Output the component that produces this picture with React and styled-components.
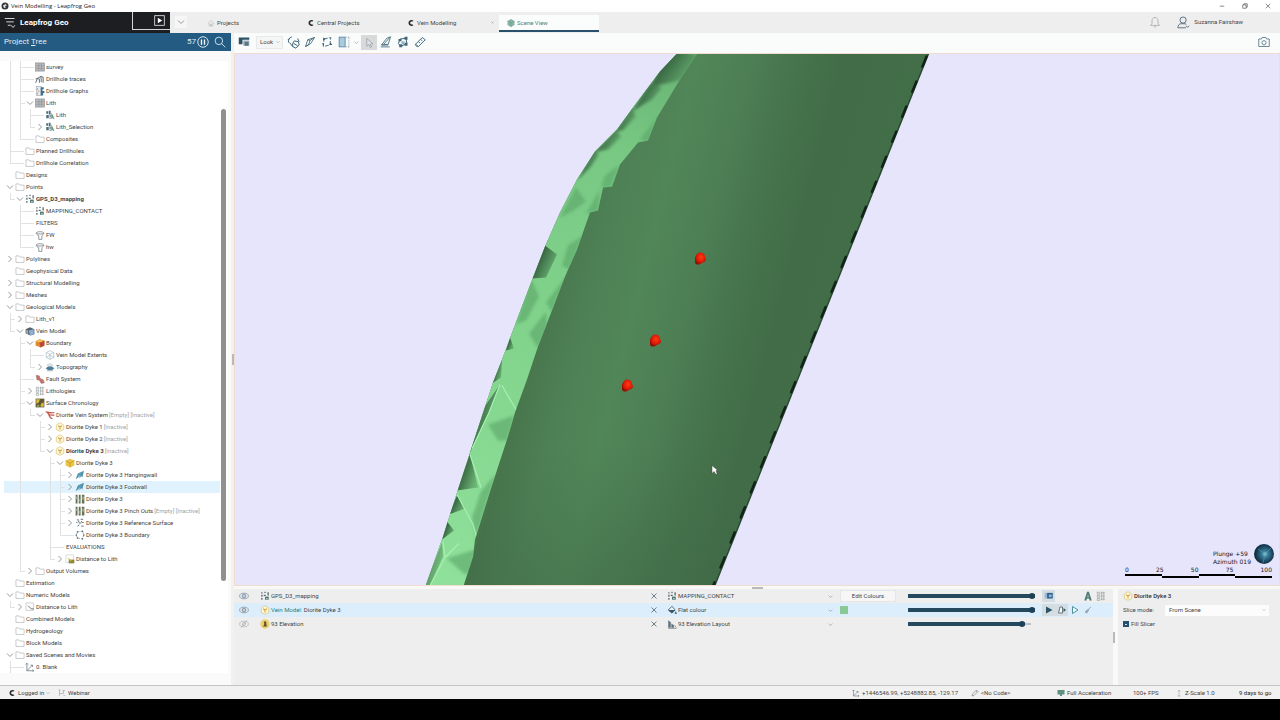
import React, { useState } from "react";
//styling
import styled, { createGlobalStyle, css } from "styled-components";

//tree rows, in the order they are listed
const treeData = [
  { level: 2, label: "survey", icon: "table" },
  { level: 2, label: "Drillhole traces", icon: "traces" },
  { level: 2, label: "Drillhole Graphs", icon: "graphs" },
  { level: 2, label: "Lith", icon: "table", open: true },
  { level: 3, label: "Lith", icon: "lith" },
  { level: 3, label: "Lith_Selection", icon: "lith", open: false },
  { level: 2, label: "Composites", icon: "folder" },
  { level: 1, label: "Planned Drillholes", icon: "folder" },
  { level: 1, label: "Drillhole Correlation", icon: "folder" },
  { level: 0, label: "Designs", icon: "folder" },
  { level: 0, label: "Points", icon: "folder", open: true },
  { level: 1, label: "GPS_D3_mapping", icon: "points", open: true, bold: true },
  { level: 2, label: "MAPPING_CONTACT", icon: "points" },
  { level: 2, label: "FILTERS" },
  { level: 2, label: "FW", icon: "filter" },
  { level: 2, label: "hw", icon: "filter" },
  { level: 0, label: "Polylines", icon: "folder", open: false },
  { level: 0, label: "Geophysical Data", icon: "folder" },
  { level: 0, label: "Structural Modelling", icon: "folder", open: false },
  { level: 0, label: "Meshes", icon: "folder", open: false },
  { level: 0, label: "Geological Models", icon: "folder", open: true },
  { level: 1, label: "Lith_v1", icon: "folder", open: false },
  { level: 1, label: "Vein Model", icon: "model", open: true },
  { level: 2, label: "Boundary", icon: "boundary", open: true },
  { level: 3, label: "Vein Model Extents", icon: "cube" },
  { level: 3, label: "Topography", icon: "topo", open: false },
  { level: 2, label: "Fault System", icon: "fault" },
  { level: 2, label: "Lithologies", icon: "legend", open: false },
  { level: 2, label: "Surface Chronology", icon: "chronology", open: true },
  { level: 3, label: "Diorite Vein System", note: "[Empty] [Inactive]", icon: "veins", open: true },
  { level: 4, label: "Diorite Dyke 1", note: "[Inactive]", icon: "dyke", open: false },
  { level: 4, label: "Diorite Dyke 2", note: "[Inactive]", icon: "dyke", open: false },
  { level: 4, label: "Diorite Dyke 3", note: "[Inactive]", icon: "dyke", open: true, bold: true },
  { level: 5, label: "Diorite Dyke 3", icon: "dykeFull", open: true },
  { level: 6, label: "Diorite Dyke 3 Hangingwall", icon: "wall", open: false },
  { level: 6, label: "Diorite Dyke 3 Footwall", icon: "wall", open: false },
  { level: 6, label: "Diorite Dyke 3", icon: "segments", open: false },
  { level: 6, label: "Diorite Dyke 3 Pinch Outs", note: "[Empty] [Inactive]", icon: "segments", open: false },
  { level: 6, label: "Diorite Dyke 3 Reference Surface", icon: "reference", open: false },
  { level: 6, label: "Diorite Dyke 3 Boundary", icon: "outline" },
  { level: 5, label: "EVALUATIONS" },
  { level: 5, label: "Distance to Lith", icon: "distanceEval", open: false },
  { level: 2, label: "Output Volumes", icon: "folder", open: false },
  { level: 0, label: "Estimation", icon: "folder" },
  { level: 0, label: "Numeric Models", icon: "folder", open: true },
  { level: 1, label: "Distance to Lith", icon: "distance", open: false },
  { level: 0, label: "Combined Models", icon: "folder" },
  { level: 0, label: "Hydrogeology", icon: "folder" },
  { level: 0, label: "Block Models", icon: "folder" },
  { level: 0, label: "Saved Scenes and Movies", icon: "folder", open: true },
  { level: 1, label: "0. Blank", icon: "axes", more: true },
];

const tabs = [
  { label: "Projects", icon: "home" },
  { label: "Central Projects", icon: "central" },
  { label: "Vein Modelling", icon: "central", closable: true },
  { label: "Scene View", icon: "scene" },
];

const shapes = [
  { id: "gps", name: "GPS_D3_mapping", icon: "points", view: "MAPPING_CONTACT", viewIcon: "points", opacity: 100, visible: true },
  { id: "vein", prefix: "Vein Model:", name: "Diorite Dyke 3", icon: "dyke", view: "Flat colour", viewIcon: "bucket", opacity: 100, visible: true },
  { id: "elev", name: "93 Elevation", icon: "section", view: "93 Elevation Layout", viewIcon: "layout", opacity: 92, visible: false },
];

//16x16 drawings
const glyphs = {
  folder: <path d="M1.5 13.5V3h5l1.5 2h6.500v8.500z" fill="#fff" stroke="#a9adb0" />,
  table: (
    <>
      <rect x="1" y="1.500" width="14" height="13" fill="#b9bcbe" stroke="#84888a" />
      <path d="M1 6h14M1 10h14M6 2v12M10.500 2v12" stroke="#8d9193" />
    </>
  ),
  traces: <path d="M1 14l3-7 5-3 4 1v9M4 7l3 1v6M9 4l1 4v5M1 8l3-1" fill="none" stroke="#59646b" strokeWidth="1.500" />,
  graphs: (
    <>
      <rect x="2" y="1" width="8" height="14" fill="#eceff1" stroke="#a0a5a8" />
      <path d="M4 3v3l3 2-3 3v3" fill="none" stroke="#c27a6c" />
      <path d="M9 2h5v3h-2v3h3v3h-2v4H9z" fill="#3c7191" />
    </>
  ),
  lith: (
    <>
      <path d="M2 2h3v4H2zM6 1h3v6H6zM2 8h4v5H2z" fill="#4b6c78" />
      <path d="M10 4v8l5 3-2-6z" fill="#5f9a86" />
      <path d="M7 8h3v3H7zM7 12h4v2H7z" fill="#8d9aa0" />
    </>
  ),
  points: (
    <>
      <path d="M2 2h2v2H2zM2 6h2v3H2zM2 11h2v3H2zM7 1h2v2H7zM6 6h3v2H6zM12 2h2v5h-2z" fill="#566168" />
      <path d="M8 9h6v5H8z" fill="#4d7775" />
      <path d="M10 11h2v2h-2z" fill="#d6e2df" />
    </>
  ),
  filter: <path d="M2 5c0-3 12-3 12 0 0 2-2 3-3 4v6H6V9C4 8 2 7 2 5zM2 5c2 2 10 2 12 0" fill="none" stroke="#7d8488" strokeWidth="1.300" />,
  model: (
    <>
      <path d="M1 5l7-3 7 3v8l-6 2-8-3z" fill="#54616a" />
      <path d="M6 7l8-2v8l-6 2z" fill="#8fb0d6" />
      <path d="M2 6l3 1v6l-3-1z" fill="#a4abb0" />
    </>
  ),
  boundary: (
    <>
      <path d="M1 5l6-3 8 2v8l-6 3-8-3z" fill="#e08a2c" />
      <path d="M7 7l8-3v8l-6 3z" fill="#b9473a" />
      <path d="M1 5l6-3 8 2-7 3z" fill="#f4bd55" />
    </>
  ),
  cube: <path d="M8 1l6 3v8l-6 3-6-3V4zM2 4l6 3 6-3M8 7v8M2 12l6-4 6 4" fill="none" stroke="#9db5bf" />,
  topo: (
    <>
      <path d="M3 5l5-3 5 3-5 3z" fill="#dfe7ea" stroke="#a7b3b8" strokeWidth=".6" />
      <path d="M1 10l4-3h6l4 3-4 3H5z" fill="#4b7f9c" />
      <path d="M3 14h10" stroke="#9aa7ad" strokeWidth="1.200" />
    </>
  ),
  fault: <path d="M2 2l5 1 1 4 5 2 2 5-5 1-3-5-4-1z" fill="#c4706c" stroke="#9a6a6a" strokeWidth=".8" />,
  legend: <path d="M2 2h4v3H2zM2 7h4v3H2zM2 12h4v3H2zM8 3h6M8 8h6M8 13h6M9 1v14M12.500 1v14" fill="none" stroke="#90969a" />,
  chronology: (
    <>
      <rect x="1" y="1" width="14" height="14" fill="#5d5638" />
      <path d="M2 2h6L6 7 2 9zM9 11c1-3 3-4 5-4v7H9z" fill="#d9b93c" />
      <path d="M3 11h4v3H3z" fill="#8ea354" />
    </>
  ),
  veins: <path d="M1 3c5 0 6 3 14 1M4 4c2 5 5 4 11 4M6 7c1 4 2 6 6 7" fill="none" stroke="#c5564f" strokeWidth="2" />,
  dyke: (
    <>
      <path d="M8 1l6 4v7l-6 3-6-3V5z" fill="#fdf6dc" stroke="#d6bd63" />
      <path d="M5 6l3 2 3-2M8 8v4" fill="none" stroke="#d1a63e" strokeWidth="1.800" />
    </>
  ),
  dykeFull: (
    <>
      <path d="M8 1l7 3v8l-7 3-7-3V4z" fill="#ecc443" />
      <path d="M1 4l7 4 7-4M8 8v7" fill="none" stroke="#b98f24" />
    </>
  ),
  wall: (
    <>
      <path d="M2 14l3-8 9-4-2 10-3-3z" fill="#5ba3bf" />
      <path d="M2 14l3-8 9-4M7 13l6-9" fill="none" stroke="#356f8c" />
    </>
  ),
  segments: (
    <>
      <path d="M1 1h3v14H1zM6 1h3v14H6zM11 1h4v14h-4z" fill="#66705a" />
      <path d="M2 4h2v4H2zM7 8h2v4H7zM12 4h2v5h-2z" fill="#a5b894" />
    </>
  ),
  reference: <path d="M3 3h3M9 2h4M2 7h2M6 8h4M12 7h2M4 13l3-2M10 13h4M6 4v3M10 5l2 3" fill="none" stroke="#5b6b74" strokeWidth="1.500" />,
  outline: (
    <>
      <path d="M4 3l8-1 2 6-2 6-8-1-2-5z" fill="none" stroke="#577082" strokeDasharray="3 2" />
      <path d="M3 2h2v2H3zM11 1h2v2h-2zM13 7h2v2h-2zM11 13h2v2h-2zM3 12h2v2H3zM1 7h2v2H1z" fill="#3f586a" />
    </>
  ),
  distanceEval: (
    <>
      <path d="M1.500 1.500h12v12h-12z" fill="#fff" stroke="#c5c8ca" />
      <path d="M6 9h9v6H6z" fill="#8a8a3c" />
      <path d="M5 7l5 4" stroke="#d8b23b" strokeWidth="2" />
    </>
  ),
  distance: (
    <>
      <path d="M1.500 1.500h12v12h-12z" fill="#fff" stroke="#b3b7ba" />
      <path d="M5 6l5 5h4" fill="none" stroke="#5a6a72" strokeWidth="1.500" />
    </>
  ),
  axes: <path d="M3 2v12h11M3 14l9-9M1 4l2-2 2 2M12 12l2 2-2 1M12 8V5H9" fill="none" stroke="#67737b" strokeWidth="1.200" />,
  home: <path d="M8 3l6 6M8 3L2 9M4 8v6h8V8M7 14v-4h2v4" fill="none" stroke="#b3b6b8" strokeWidth="1.200" />,
  central: <path d="M13 3.500C9 .5 3 3 3 8s6 7.500 10 4.500l-3-2c-2 1-3.500-.5-3.500-2.500S8 4.500 10 5.500z" fill="#23282c" />,
  scene: (
    <>
      <path d="M8 0l7 4v8l-7 4-7-4V4z" fill="#86b3a5" />
      <path d="M1 4l7 4 7-4M8 8v8" fill="none" stroke="#69998b" />
    </>
  ),
  bucket: (
    <>
      <path d="M2 8l6-6 5 6-5 5z" fill="#eef3f6" stroke="#33566b" strokeWidth="1.300" />
      <path d="M2 8h11l-5 5z" fill="#33566b" />
      <path d="M14 10l2 4h-4z" fill="#33566b" />
    </>
  ),
  layout: (
    <>
      <path d="M2 14V2l4 3v9zM7 14V7l4 3v4z" fill="#62707a" />
      <path d="M2 15h13M12 10l3 4" stroke="#8e979d" strokeWidth="1.500" />
    </>
  ),
  section: (
    <>
      <circle cx="8" cy="8" r="7.500" fill="#ecd06a" />
      <path d="M6 4h4v3l1 5H5l2-4z" fill="#5b5030" />
    </>
  ),
  eye: (
    <>
      <ellipse cx="8" cy="8" rx="7" ry="4.500" fill="#e8eef3" stroke="#8c9aa6" strokeWidth="1.300" />
      <circle cx="8" cy="8" r="3" fill="#c3d0da" stroke="#73879a" strokeWidth="1.300" />
    </>
  ),
  eyeOff: (
    <>
      <ellipse cx="8" cy="8" rx="7" ry="4.500" fill="none" stroke="#a9afb4" />
      <circle cx="8" cy="8" r="2.500" fill="none" stroke="#a0a7ac" />
      <path d="M3 14L13 2" stroke="#a0a7ac" />
    </>
  ),
  close: <path d="M3 3l10 10M13 3L3 13" stroke="#4c6472" strokeWidth="1.600" />,
  down: <path d="M2 5l6 6 6-6" fill="none" stroke="#7a8083" strokeWidth="1.600" />,
  right: <path d="M5 2l6 6-6 6" fill="none" stroke="#7a8083" strokeWidth="1.600" />,
  menu: <path d="M1 2h13M3 6.500h10M5 11h4M9.500 11l2.500 3 2.500-3" fill="none" stroke="#e4e6e8" strokeWidth="1.200" />,
  play: (
    <>
      <rect x="1" y="1" width="14" height="14" fill="none" stroke="#e7e7e7" strokeWidth="1.200" />
      <path d="M5.500 4l6.500 4-6.500 4z" fill="#fff" />
    </>
  ),
  pause: (
    <>
      <circle cx="8" cy="8" r="7" fill="none" stroke="#dce9f1" strokeWidth="1.300" />
      <path d="M6 4.500v7M10 4.500v7" stroke="#fff" strokeWidth="1.800" />
    </>
  ),
  search: <path d="M6.500 1.500a5 5 0 1 1 0 10 5 5 0 0 1 0-10zM10 10l5 5" fill="none" stroke="#c9dde9" strokeWidth="1.300" />,
  bell: <path d="M2 12.500h12l-2-2.500V6.500C12 4 10.500 2 8 2S4 4 4 6.500V10zM6.500 14.500h3" fill="none" stroke="#9fa3a6" />,
  user: (
    <>
      <circle cx="7.500" cy="5" r="3.800" fill="none" stroke="#5f7080" strokeWidth="1.200" />
      <path d="M1 14.500c0-3 2-5 4-5h5l1.500 1M1 14.500h10M11 12l2 2 2-2" fill="none" stroke="#5f7080" strokeWidth="1.200" />
    </>
  ),
  camera: (
    <>
      <path d="M1 4h3.500l1-2h5l1 2H15v10H1z" fill="none" stroke="#5c7d8e" strokeWidth="1.200" />
      <circle cx="8" cy="9" r="2.800" fill="none" stroke="#5c7d8e" strokeWidth="1.200" />
    </>
  ),
  clearScene: (
    <>
      <path d="M1 2h14v3H6v6H1z" fill="#2f5166" />
      <path d="M7 6h8v7H7z" fill="#9aabb5" />
      <path d="M9 8h5v5H9z" fill="#5a7585" />
    </>
  ),
  slicer: (
    <path
      d="M2 8c-1-3 1-6 4-7M1 5l3-3M9 6l5 1 1 4-4 4-4-2 0-4zM3 8l4 5M13 3l2 4M8 9l5 3"
      fill="none"
      stroke="#3c6275"
      strokeWidth="1.200"
    />
  ),
  section2: <path d="M2 14l3-9 9-3-5 8zM5 5l3 1 6-4M8 6l-2 6M2 14l4-2" fill="none" stroke="#3c6275" strokeWidth="1.100" />,
  plane: (
    <>
      <path d="M4 4l9-2-1 10-9 2z" fill="none" stroke="#3c6275" strokeWidth="1.200" strokeDasharray="5 2" />
      <path d="M3 2l3 2-3 2zM13 9l2 3h-4zM1 10h3v3z" fill="#2f5468" />
    </>
  ),
  slice: (
    <>
      <rect x="1.500" y="1.500" width="8" height="13" fill="#a9cbe0" stroke="#4f7a94" />
      <path d="M10 1.500h5M10 14.500h5M14.500 2v13" fill="none" stroke="#8da2af" strokeDasharray="2 1" />
    </>
  ),
  pointer: <path d="M4 2l9 8-4 .500 2 4-2 .5-2-4-3 2.500z" fill="#dfe2e3" stroke="#8f999f" />,
  draw: <path d="M1 14.500h12M2 12L9 3l5-2-3 10zM5 11l8-9M2 12h9" fill="none" stroke="#3c6275" strokeWidth="1.100" />,
  ring: (
    <>
      <path d="M4 4l8-1 1 7-8 4-3-4z" fill="none" stroke="#3c6275" strokeWidth="1.300" />
      <path d="M2 4h4v3H2zM10 1h4v4h-4zM10 9h4v4h-4zM3 11h4v4H3z" fill="#42677a" />
      <path d="M6 7h4v4H6z" fill="#8fb5c5" />
    </>
  ),
  ruler: <path d="M2 11L11 2l4 3-9 9c-2 1-4-1-4-3zM2 11l4 3M6 8l2 1M9 5l2 1" fill="none" stroke="#466d80" strokeWidth="1.300" />,
  pencil: <path d="M2 14l1-4 8-8 3 3-8 8zM10 4l2 2" fill="none" stroke="#6d767c" strokeWidth="1.200" />,
  monitor: <path d="M1 2h14v9h-5v3H6v-3H1z" fill="#5c9080" />,
  zscale: <path d="M8 2v12M5 5l3-3 3 3M5 14h6" fill="none" stroke="#a3a8ab" strokeWidth="1.300" />,
  branch: <path d="M3 2v12M3 9h8M11 9V3M1 2h4M9 3h5M11 13h3" fill="none" stroke="#9aa0a4" strokeWidth="1.200" />,
  sync: (
    <>
      <path d="M1 3h8v9H1z" fill="#9db7d0" />
      <path d="M5 3h9v9H5z" fill="#30618c" />
      <circle cx="10" cy="7.500" r="2.500" fill="#8db8dd" />
    </>
  ),
  letterA: <path d="M2 15L6.500 1h3L14 15h-3.500l-.8-3H6.300l-.8 3zM7 9.500h2L8 5.500z" fill="#4e7d76" />,
  solidPlay: <path d="M2 1l13 7-13 7z" fill="#2b5266" />,
  edgePlay: <path d="M3 1l11 7-11 7z" fill="#f1fbff" stroke="#3e8391" strokeWidth="1.800" />,
  frontPlay: (
    <>
      <path d="M1 14L4 2h5v12z" fill="#f4f6f7" stroke="#3b5563" strokeWidth="1.500" />
      <path d="M11 4l5 4-5 4z" fill="#3b5563" />
    </>
  ),
  brush: <path d="M14 2L7 8M9 8l-3 6-4-2 4-4h4" fill="#a8bfc8" stroke="#7f9dab" strokeWidth="1.600" />,
  app: (
    <>
      <circle cx="8" cy="8" r="7" fill="#33383c" />
      <path d="M4 7l5-3 3 3-4 1 2 3-4 1z" fill="#dde0e2" />
    </>
  ),
  minimise: <path d="M2 8.500h12" stroke="#333" strokeWidth="1.500" />,
  restore: <path d="M2 5h9v9H2zM5 5V2h9v9h-3" fill="none" stroke="#333" strokeWidth="1.500" />,
  windowClose: <path d="M2 2l12 12M14 2L2 14" stroke="#333" strokeWidth="1.500" />,
};

const Icon = ({ name, size = 10 }) => (
  <Glyph viewBox="0 0 16 16" $size={size} aria-hidden="true">
    {glyphs[name]}
  </Glyph>
);

//true when a later row still hangs on the guide line of that level
const hasNext = (index, level) => {
  for (let i = index + 1; i < treeData.length; i++) {
    if (treeData[i].level < level) return false;
    if (treeData[i].level === level) return true;
  }
  return Boolean(treeData[treeData.length - 1].more);
};

const ProjectTree = () => {
  const [selected, setSelected] = useState(35);
  return (
    <Sidebar>
      <SideHeader>
        <h2>
          Project <u>T</u>ree
        </h2>
        <span>57</span>
        <IconButton aria-label="Pause processing">
          <Icon name="pause" size={12} />
        </IconButton>
        <IconButton aria-label="Search">
          <Icon name="search" size={12} />
        </IconButton>
      </SideHeader>
      <TreeArea>
        <Tree role="tree">
          {treeData.map((row, i) => (
            <TreeRow
              key={i}
              role="treeitem"
              $selected={i === selected}
              onClick={() => setSelected(i)}
            >
              {Array.from({ length: row.level }, (_, k) => (
                <Guide key={k} $line={hasNext(i, k + 1)} $tick={k === row.level - 1} />
              ))}
              {row.open === undefined ? (
                <Guide $dash={row.level > 0} />
              ) : (
                <Toggle aria-label={row.open ? "Collapse" : "Expand"}>
                  <Icon name={row.open ? "down" : "right"} size={8} />
                </Toggle>
              )}
              {row.icon && <Icon name={row.icon} />}
              <Label $bold={row.bold}>{row.label}</Label>
              {row.note && <Note>{row.note}</Note>}
            </TreeRow>
          ))}
        </Tree>
        <ScrollTrack>
          <ScrollThumb />
        </ScrollTrack>
      </TreeArea>
    </Sidebar>
  );
};

//vein mesh
const Mesh = () => (
  <Canvas viewBox="235 54 1044 532" preserveAspectRatio="xMidYMid slice" aria-hidden="true">
    <defs>
      <linearGradient id="face" gradientUnits="userSpaceOnUse" x1="540" y1="290" x2="850" y2="370">
        <stop offset="0" stopColor="#47744b" />
        <stop offset=".14" stopColor="#4e8055" />
        <stop offset=".3" stopColor="#518658" />
        <stop offset=".46" stopColor="#4d7e54" />
        <stop offset=".6" stopColor="#46744c" />
        <stop offset=".74" stopColor="#416c47" />
        <stop offset="1" stopColor="#426e48" />
      </linearGradient>
      <linearGradient id="fade" x1="0" y1="0" x2="0" y2="1">
        <stop offset=".5" stopColor="#3f6a46" stopOpacity="0" />
        <stop offset="1" stopColor="#3f6a46" stopOpacity=".45" />
      </linearGradient>
      <linearGradient id="rim" gradientUnits="userSpaceOnUse" x1="690" y1="53" x2="450" y2="587">
        <stop offset="0" stopColor="#68b273" />
        <stop offset=".2" stopColor="#78c883" />
        <stop offset=".5" stopColor="#80d28b" />
        <stop offset="1" stopColor="#8fe09a" />
      </linearGradient>
      <linearGradient id="facet" x1="0" y1="0" x2="1" y2=".6">
        <stop offset=".1" stopColor="#1f3e28" />
        <stop offset="1" stopColor="#6bb576" />
      </linearGradient>
      <radialGradient id="cone" cx=".55" cy=".4" r=".6">
        <stop offset="0" stopColor="#ff3a14" />
        <stop offset=".6" stopColor="#e01c06" />
        <stop offset="1" stopColor="#8e0f04" />
      </radialGradient>
      <filter id="shade" x="-10%" y="-10%" width="120%" height="120%">
        <feGaussianBlur stdDeviation="1.5" />
      </filter>
      <clipPath id="rimClip">
        <path d="M678 53L660 72 633 108 617 130 595 152 577 180 560 213 545 247 533 278 520 312 502 360 493 383 470 453 458 490 443 537 425 588H463L473 557 475 540 490 492 507 440 515 413 527 380 538 347 550 316 565 277 577 250 590 213 598 211 603 188 612 187 620 165 638 143 648 141 657 118 680 80 698 53z" />
      </clipPath>
    </defs>
    <path
      d="M678 53L660 72 633 108 617 130 595 152 577 180 560 213 545 247 533 278 520 312 502 360 493 383 470 453 458 490 443 537 425 588H714L929 53z"
      fill="url(#face)"
    />
    <path d="M553 310L463 587H714L826 310z" fill="url(#fade)" />
    <g clipPath="url(#rimClip)">
      <path d="M420 50h290v540H420z" fill="url(#rim)" />
      <g fill="#5aa467" opacity=".6" filter="url(#shade)">
        <path d="M657 118l-9 24-8-2zM620 165l-9 22-10 1 4-12zM600 190l-2 22-12 2zM583 236l-14 34-7-4 6-20z" />
        <path d="M546 312l2 20-11 16-8-14zM488 425l26-9-6 25-10 0zM566 277l-14 36-6-10z" />
        <path d="M496 474l-20 64-4-20 9-26zM447 559l28-9-2 20-8 5zM576 188l10 14-14 10-12 6z" />
        <path d="M531 279l8 18-13 24-10 4z" />
      </g>
      <g fill="url(#facet)" filter="url(#shade)">
        <path d="M676 50l22 6-14 24-18 4-16 4 8-16z" />
        <path d="M650 84l12 4-10 12-20 12z" />
        <path d="M632 108l4 9-13 14-8 1z" />
        <path d="M616 130l5 7-13 13-14 3z" />
        <path d="M594 150l5 5-8 12-14 14z" />
      </g>
      <g fill="url(#facet)">
        <path d="M545 246l12 9-11 23-14 1z" />
        <path d="M510 338l4 11-8 2z" />
        <path d="M502 360l-1 18-9 6z" />
        <path d="M500 385l-12 30-19 40 10-40z" opacity=".9" />
        <path d="M470 454l8 34-21 3z" />
        <path d="M457 496l8 13-16 6z" />
        <path d="M447 522l7 9-12 9z" />
        <path d="M442 543l1 14-14 31h-5z" opacity=".6" />
      </g>
      <path
        d="M500 385l-11 28-17 36M470 455l11 33M502 386l14 24M457 495l16 30 5 18M443 542l2 16-16 30M445 558l14-14"
        fill="none"
        stroke="#a8efb0"
        strokeWidth="1.200"
      />
    </g>
    <path d="M929 53L714 588" stroke="#2a4832" strokeWidth="1.500" />
    <path d="M926.500 57L712.500 588" stroke="#122419" strokeWidth="2.500" strokeDasharray="11 16" strokeLinecap="round" />
    {[
      [700, 259],
      [655, 341],
      [627, 386],
    ].map(([x, y]) => (
      <path
        key={x}
        d={`M${x} ${y - 6}c3 0 5 2 5 4l1 3c0 2-3 3-5 4-2 2-6 1-6-1v-5c1-3 3-5 5-5z`}
        fill="url(#cone)"
      />
    ))}
    <path d="M712 466v8l2-2 2 3 1-1-1-3h2z" fill="#fff" stroke="#444" strokeWidth=".5" />
  </Canvas>
);

const SceneView = () => (
  <Viewport>
    <Mesh />
    <Hud>
      <Orientation>
        <p>
          Plunge +59
          <br />
          Azimuth 019
        </p>
        <Ball viewBox="0 0 20 20" aria-hidden="true">
          <defs>
            <radialGradient id="ball" cx=".55" cy=".5" r=".5">
              <stop offset="0" stopColor="#a7e0ec" />
              <stop offset=".25" stopColor="#3f86a0" />
              <stop offset=".7" stopColor="#1f4c66" />
              <stop offset="1" stopColor="#0f2d40" />
            </radialGradient>
          </defs>
          <circle cx="10" cy="10" r="10" fill="url(#ball)" />
          <path d="M11 10L4 5M11 10l6-6M11 10l-2 9" stroke="#5b9db3" strokeWidth=".6" />
        </Ball>
      </Orientation>
      <ScaleLabels>
        <span>0</span>
        <span>25</span>
        <span>50</span>
        <span>75</span>
        <span>100</span>
      </ScaleLabels>
      <ScaleBar>
        <i />
        <i />
        <i />
        <i />
      </ScaleBar>
    </Hud>
  </Viewport>
);

const ShapeList = () => {
  const [opacity, setOpacity] = useState(shapes.map((s) => s.opacity));
  const changeHandler = (i, value) => {
    setOpacity(opacity.map((o, k) => (k === i ? Number(value) : o)));
  };
  return (
    <Shapes>
      {shapes.map((shape, i) => (
        <ShapeRow key={shape.id} $selected={shape.id === "vein"}>
          <IconButton aria-label="Toggle visibility">
            <Icon name={shape.visible ? "eye" : "eyeOff"} />
          </IconButton>
          <ShapeName>
            <Icon name={shape.icon} />
            <span>
              {shape.prefix && <em>{shape.prefix} </em>}
              {shape.name}
            </span>
          </ShapeName>
          <IconButton aria-label="Remove from scene">
            <Icon name="close" size={8} />
          </IconButton>
          <ViewPick>
            <Icon name={shape.viewIcon} />
            <select aria-label={`${shape.name} view`}>
              <option>{shape.view}</option>
            </select>
            <Icon name="down" size={5} />
          </ViewPick>
          <Cell>
            {shape.id === "gps" && <EditButton>Edit Colours</EditButton>}
            {shape.id === "vein" && <Swatch aria-label="Colour" />}
          </Cell>
          <Cell>
            <Range
              type="range"
              aria-label="Opacity"
              value={opacity[i]}
              onChange={(e) => changeHandler(i, e.target.value)}
              style={{ "--fill": `${opacity[i]}%` }}
            />
          </Cell>
          <Actions>
            {shape.id === "gps" && (
              <>
                <ToolToggle $on aria-label="Show synced">
                  <Icon name="sync" />
                </ToolToggle>
                <Spacer />
                <ToolToggle aria-label="Show text">
                  <Icon name="letterA" />
                </ToolToggle>
                <ToolToggle aria-label="Show legend">
                  <Icon name="legend" />
                </ToolToggle>
              </>
            )}
            {shape.id === "vein" && (
              <>
                <ToolToggle $on aria-label="Solid">
                  <Icon name="solidPlay" size={8} />
                </ToolToggle>
                <ToolToggle $on aria-label="Front face">
                  <Icon name="frontPlay" size={8} />
                </ToolToggle>
                <ToolToggle aria-label="Edges">
                  <Icon name="edgePlay" size={8} />
                </ToolToggle>
                <ToolToggle aria-label="Paint">
                  <Icon name="brush" size={8} />
                </ToolToggle>
              </>
            )}
          </Actions>
        </ShapeRow>
      ))}
    </Shapes>
  );
};

const App = () => {
  return (
    <Page>
      <GlobalStyle />
      <TitleBar>
        <Icon name="app" size={8} />
        <span>Vein Modelling - Leapfrog Geo</span>
        <WindowButtons>
          <IconButton aria-label="Minimise">
            <Icon name="minimise" size={6} />
          </IconButton>
          <IconButton aria-label="Restore">
            <Icon name="restore" size={6} />
          </IconButton>
          <IconButton aria-label="Close">
            <Icon name="windowClose" size={6} />
          </IconButton>
        </WindowButtons>
      </TitleBar>
      <TopBar>
        <Brand>
          <IconButton aria-label="Menu">
            <Icon name="menu" size={12} />
          </IconButton>
          <h1>Leapfrog Geo</h1>
          <PlayBox>
            <IconButton aria-label="Play">
              <Icon name="play" size={11} />
            </IconButton>
          </PlayBox>
        </Brand>
        <TabMenu aria-label="Tab list">
          <Icon name="down" size={8} />
        </TabMenu>
        <Tabs>
          {tabs.map((tab) => (
            <Tab key={tab.label} $active={tab.label === "Scene View"}>
              <Icon name={tab.icon} size={8} />
              <span>{tab.label}</span>
              {tab.closable && <Icon name="close" size={3} />}
            </Tab>
          ))}
        </Tabs>
        <Account>
          <IconButton aria-label="Notifications">
            <Icon name="bell" size={12} />
          </IconButton>
          <UserButton>
            <Icon name="user" size={13} />
            Suzanna Fairshaw
          </UserButton>
        </Account>
      </TopBar>
      <Workspace>
        <ProjectTree />
        <Splitter>
          <Grip $vertical />
        </Splitter>
        <Main>
          <Toolbar>
            <Tool aria-label="Clear scene">
              <Icon name="clearScene" size={12} />
            </Tool>
            <LookPick>
              <select aria-label="Look">
                <option>Look</option>
              </select>
              <Icon name="down" size={4} />
            </LookPick>
            <Tool aria-label="Slicer">
              <Icon name="slicer" size={13} />
            </Tool>
            <Tool aria-label="Section">
              <Icon name="section2" size={12} />
            </Tool>
            <Tool aria-label="Plane">
              <Icon name="plane" size={12} />
            </Tool>
            <Tool aria-label="Slice side">
              <Icon name="slice" size={12} />
            </Tool>
            <Tool $narrow aria-label="Slice options">
              <Icon name="down" size={5} />
            </Tool>
            <Tool $on aria-label="Select">
              <Icon name="pointer" size={11} />
            </Tool>
            <Tool aria-label="Draw slice line">
              <Icon name="draw" size={12} />
            </Tool>
            <Tool aria-label="Draw plane">
              <Icon name="ring" size={12} />
            </Tool>
            <Tool aria-label="Ruler">
              <Icon name="ruler" size={12} />
            </Tool>
            <Spacer />
            <Tool aria-label="Take screenshot">
              <Icon name="camera" size={12} />
            </Tool>
          </Toolbar>
          <SceneView />
          <SceneGrip>
            <Grip />
          </SceneGrip>
          <BottomPanels>
            <ShapeList />
            <PanelGrip>
              <Grip $vertical />
            </PanelGrip>
            <Properties>
              <h3>
                <Icon name="dyke" />
                Diorite Dyke 3
              </h3>
              <Field>
                <label htmlFor="slice-mode">Slice mode:</label>
                <SlicePick>
                  <select id="slice-mode">
                    <option>From Scene</option>
                  </select>
                  <Icon name="down" size={4} />
                </SlicePick>
              </Field>
              <CheckLabel>
                <input type="checkbox" defaultChecked />
                Fill Slicer
              </CheckLabel>
            </Properties>
          </BottomPanels>
        </Main>
      </Workspace>
      <StatusBar>
        <StatusItem $w={50}>
          <Icon name="central" size={8} />
          Logged in
          <Icon name="down" size={4} />
        </StatusItem>
        <StatusItem>
          <Icon name="branch" size={8} />
          Webinar
        </StatusItem>
        <Spacer />
        <StatusItem $w={119}>
          <Icon name="axes" size={8} />
          +1446546.99, +5248882.85, -129.17
        </StatusItem>
        <StatusItem $w={86}>
          <Icon name="pencil" size={8} />
          &lt;No Code&gt;
        </StatusItem>
        <StatusItem $w={76}>
          <Icon name="monitor" size={8} />
          Full Acceleration
        </StatusItem>
        <StatusItem $w={42}>100+ FPS</StatusItem>
        <StatusItem $w={64}>
          <Icon name="zscale" size={8} />
          Z-Scale 1.0
        </StatusItem>
        <StatusItem $w={40} $dark>
          9 days to go
        </StatusItem>
      </StatusBar>
      <BottomStrip />
    </Page>
  );
};

const GlobalStyle = createGlobalStyle`
  * {
    box-sizing: border-box;
    margin: 0;
    padding: 0;
  }
  body {
    background: #000;
    color: #444;
    font: 6px/12px Roboto, "Liberation Sans", sans-serif;
  }
  button, select, input {
    font: inherit;
    color: inherit;
    border: 0;
    border-radius: 0;
    background: none;
  }
  select {
    appearance: none;
    flex: 1;
    min-width: 0;
  }
`;

const Glyph = styled.svg`
  width: ${(p) => p.$size}px;
  height: ${(p) => p.$size}px;
  flex: none;
  display: block;
`;

const Page = styled.div`
  min-height: 100vh;
  display: flex;
  flex-direction: column;
  background: #fbfbfb;
`;

const IconButton = styled.button`
  display: flex;
  align-items: center;
  justify-content: center;
`;

const Spacer = styled.div`
  flex: 1;
`;

const TitleBar = styled.header`
  height: 12px;
  display: flex;
  align-items: center;
  gap: 2px;
  padding-left: 1px;
  background: #fff;
  color: #222;
  font-family: "Open Sans", sans-serif;
`;

const WindowButtons = styled.div`
  margin-left: auto;
  display: flex;
  gap: 17px;
  padding-right: 9px;
`;

const TopBar = styled.div`
  height: 21px;
  display: flex;
  align-items: stretch;
  background: #eeeeee;
`;

const Brand = styled.div`
  width: 170px;
  display: flex;
  align-items: center;
  gap: 4px;
  padding-left: 4px;
  background: #1c1e22;
  color: #fff;
  h1 {
    font-size: 8px;
    font-weight: 700;
  }
`;

const PlayBox = styled.div`
  width: 38px;
  height: 18px;
  margin-left: auto;
  align-self: flex-start;
  display: flex;
  align-items: center;
  justify-content: flex-end;
  padding-right: 5px;
  border-left: 1px solid #d5d5d5;
  border-bottom: 1px solid #d5d5d5;
`;

const TabMenu = styled.button`
  width: 12px;
  height: 12px;
  margin: 4px 12px 0 5px;
  display: flex;
  align-items: center;
  justify-content: center;
  background: #f6f6f6;
`;

const Tabs = styled.nav`
  display: flex;
  align-items: flex-end;
  padding-bottom: 1px;
`;

const Tab = styled.button`
  width: 100px;
  height: 17px;
  display: flex;
  align-items: center;
  gap: 2px;
  padding: 0 5px 0 8px;
  border-bottom: 2px solid transparent;
  color: #3f4549;
  span {
    flex: 1;
    text-align: left;
  }
  ${(p) =>
    p.$active &&
    css`
      background: #fbfdfd;
      border-bottom-color: #2b506b;
      color: #4c7f80;
    `}
`;

const Account = styled.div`
  margin-left: auto;
  display: flex;
  align-items: center;
  gap: 16px;
  padding: 0 37px 1px 0;
`;

const UserButton = styled.button`
  display: flex;
  align-items: center;
  gap: 4px;
`;

const Workspace = styled.div`
  flex: 1;
  display: flex;
`;

const Sidebar = styled.aside`
  width: 231px;
  flex: none;
  display: flex;
  flex-direction: column;
  background: #fafafa;
`;

const SideHeader = styled.div`
  height: 18px;
  display: flex;
  align-items: center;
  gap: 5px;
  padding: 0 5px 0 4px;
  background: #235b82;
  color: #e2edf4;
  font-size: 8px;
  h2 {
    flex: 1;
    font-size: 8px;
    font-weight: 400;
  }
  span {
    margin-right: -4px;
  }
`;

const TreeArea = styled.div`
  flex: 1;
  display: flex;
  margin: 10px 3px 12px 0;
  background: #fff;
`;

const Tree = styled.ul`
  flex: 1;
  padding-left: 4px;
  list-style: none;
`;

const TreeRow = styled.li`
  height: 12px;
  display: flex;
  align-items: center;
  padding-left: 1px;
  background: ${(p) => (p.$selected ? "#e0f2fd" : "none")};
  white-space: nowrap;
  cursor: default;
`;

const grey = "#e0e1e2";

const Guide = styled.span`
  width: 10px;
  height: 12px;
  flex: none;
  background-repeat: no-repeat;
  background-image: linear-gradient(${grey}, ${grey}), linear-gradient(${grey}, ${grey});
  background-position: 5px 0, ${(p) => (p.$dash ? "0" : "5px")} 6px;
  background-size:
    ${(p) => (p.$line ? "1px 12px" : p.$tick ? "1px 6px" : "0 0")},
    ${(p) => (p.$dash ? "9px 1px" : p.$tick ? "5px 1px" : "0 0")};
`;

const Toggle = styled.button`
  width: 10px;
  height: 12px;
  flex: none;
  display: flex;
  align-items: center;
  justify-content: center;
`;

const Label = styled.span`
  margin-left: 1px;
  font-weight: ${(p) => (p.$bold ? 700 : 400)};
`;

const Note = styled.span`
  margin-left: 1px;
  color: #a3a3a3;
`;

const ScrollTrack = styled.div`
  width: 8px;
  padding: 48px 1px 92px;
  display: flex;
`;

const ScrollThumb = styled.div`
  width: 5px;
  border-radius: 3px;
  background: #909090;
`;

const Splitter = styled.div`
  width: 3px;
  flex: none;
  display: flex;
  align-items: center;
  justify-content: center;
  background: #f3f1ee;
`;

const Grip = styled.span`
  width: ${(p) => (p.$vertical ? "2px" : "11px")};
  height: ${(p) => (p.$vertical ? "11px" : "2px")};
  background: #b9b9b9;
`;

const Main = styled.main`
  flex: 1;
  min-width: 0;
  display: flex;
  flex-direction: column;
`;

const Toolbar = styled.div`
  height: 20px;
  display: flex;
  align-items: center;
  gap: 1px;
  padding: 0 8px 2px 2px;
  background: #fafcfb;
`;

const Tool = styled.button`
  width: ${(p) => (p.$narrow ? "7px" : "16px")};
  height: 15px;
  display: flex;
  align-items: center;
  justify-content: center;
  background: ${(p) => (p.$on ? "#d7d9da" : "none")};
`;

const LookPick = styled.div`
  width: 27px;
  height: 13px;
  display: flex;
  align-items: center;
  margin: 0 1px 0 3px;
  padding: 0 2px 0 3px;
  background: #f4f5f5;
  border: 1px solid #e7e9ea;
`;

const Viewport = styled.section`
  flex: 1;
  min-height: 320px;
  position: relative;
  overflow: hidden;
  background: #e6e5fc;
  border: 1px solid #f0ddd0;
`;

//fills the viewport behind the readouts
const Canvas = styled.svg`
  position: absolute;
  inset: 0;
  width: 100%;
  height: 100%;
`;

const Hud = styled.div`
  position: absolute;
  right: 5px;
  bottom: 7px;
  width: 149px;
  color: #16161c;
  font: 6px/8px "DejaVu Sans", sans-serif;
`;

const Orientation = styled.div`
  display: flex;
  align-items: flex-end;
  justify-content: flex-end;
  gap: 3px;
`;

const Ball = styled.svg`
  width: 20px;
  height: 20px;
  margin-bottom: 2px;
`;

const ScaleLabels = styled.div`
  display: flex;
  justify-content: space-between;
  padding-right: 2px;
`;

const ScaleBar = styled.div`
  display: grid;
  grid-template-columns: repeat(4, 1fr);
  height: 4px;
  padding-right: 2px;
  i {
    height: 2px;
    background: #000;
  }
  i:nth-child(even) {
    align-self: end;
  }
`;

const SceneGrip = styled.div`
  height: 3px;
  display: flex;
  align-items: center;
  justify-content: center;
  background: #f8f8f6;
`;

const BottomPanels = styled.div`
  min-height: 96px;
  display: flex;
`;

const Shapes = styled.div`
  flex: 1;
  min-width: 0;
  background: #eeeeee;
`;

const ShapeRow = styled.div`
  height: 14px;
  display: grid;
  grid-template-columns: 20px minmax(0, 1fr) 22px 172px 68px 132px 76px;
  align-items: center;
  background: ${(p) => (p.$selected ? "#dceefb" : "none")};
`;

const ShapeName = styled.div`
  display: flex;
  align-items: center;
  gap: 1px;
  padding-left: 6px;
  em {
    font-style: normal;
    color: #2c7f7b;
  }
`;

const ViewPick = styled.div`
  display: flex;
  align-items: center;
  gap: 1px;
  padding: 0 4px 0 2px;
`;

const Cell = styled.div`
  display: flex;
  align-items: center;
  padding-left: 3px;
`;

const Actions = styled(Cell)`
  padding: 0 6px 0 5px;
`;

const EditButton = styled.button`
  width: 56px;
  height: 12px;
  line-height: 10px;
  background: #f6f6f6;
  border: 1px solid #e6e6e6;
`;

const Swatch = styled.button`
  width: 8px;
  height: 8px;
  background: #8ac995;
`;

const Range = styled.input`
  appearance: none;
  width: 127px;
  height: 8px;
  background: linear-gradient(#24495f, #24495f) 0 2px / var(--fill) 4px no-repeat,
    linear-gradient(#bcc2c6, #bcc2c6) 0 3px / 123px 2px no-repeat;
  border-radius: 3px;
  &::-webkit-slider-thumb {
    appearance: none;
    width: 6px;
    height: 6px;
    border-radius: 50%;
    background: #1f4157;
  }
`;

const ToolToggle = styled.button`
  width: 13px;
  height: 12px;
  display: flex;
  align-items: center;
  justify-content: center;
  background: ${(p) => (p.$on ? "#d3dde2" : "none")};
`;

const PanelGrip = styled.div`
  width: 5px;
  display: flex;
  align-items: center;
  background: #f9f9f9;
`;

const Properties = styled.section`
  width: 162px;
  padding: 1px 11px 0 5px;
  background: #eeeeee;
  h3 {
    height: 12px;
    display: flex;
    align-items: center;
    gap: 1px;
    color: #2e2e2e;
    font-size: 6px;
    font-weight: 500;
  }
`;

const Field = styled.div`
  height: 14px;
  margin-top: 1px;
  display: flex;
  align-items: center;
  justify-content: space-between;
`;

const SlicePick = styled.div`
  width: 104px;
  height: 11px;
  display: flex;
  align-items: center;
  padding: 0 3px 0 4px;
  background: #fcfcfc;
`;

const CheckLabel = styled.label`
  height: 14px;
  display: flex;
  align-items: center;
  gap: 2px;
  input {
    appearance: none;
    width: 6px;
    height: 6px;
    border: 1px solid #23516f;
  }
  input:checked {
    background: linear-gradient(#cfe0ea, #cfe0ea) center / 2px 1px no-repeat #23516f;
  }
`;

const StatusBar = styled.footer`
  height: 14px;
  display: flex;
  align-items: center;
  padding: 0 1px 0 8px;
  background: #f1f1f1;
  border-top: 1px solid #c4c4c4;
`;

const StatusItem = styled.div`
  width: ${(p) => (p.$w ? `${p.$w}px` : "auto")};
  display: flex;
  align-items: center;
  gap: 2px;
  white-space: nowrap;
  color: ${(p) => (p.$dark ? "#222" : "inherit")};
`;

const BottomStrip = styled.div`
  height: 21px;
  background: #000;
`;

export default App;
